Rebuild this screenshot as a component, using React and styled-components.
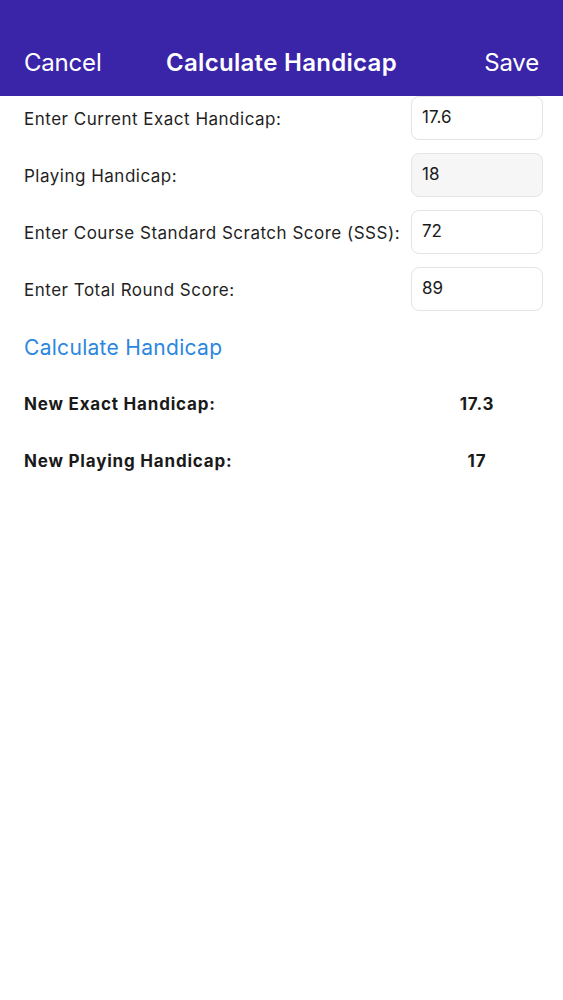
import styled, { createGlobalStyle } from 'styled-components';

const GlobalStyle = createGlobalStyle`
  html, body {
    margin: 0;
    padding: 0;
    background: #ffffff;
  }
  body {
    font-family: Inter, "Liberation Sans", Arial, sans-serif;
  }
`;

const Screen = styled.div`
  width: 563px;
  min-height: 1000px;
  background: #fff;
`;

const NavBar = styled.header`
  height: 96px;
  background: #3a25a9;
  display: grid;
  grid-template-columns: 1fr auto 1fr;
  align-items: end;
  padding: 0 24px 19px 24px;
  box-sizing: border-box;
  color: #fff;
`;

const NavButton = styled.span`
  font-size: 24px;
  font-weight: 400;
  line-height: 28px;
  letter-spacing: -0.2px;
  justify-self: ${(p) => (p.$end ? 'end' : 'start')};
`;

const NavTitle = styled.h1`
  margin: 0;
  font-size: 24px;
  font-weight: 600;
  line-height: 28px;
  letter-spacing: 0.3px;
`;

const Form = styled.div`
  display: flex;
  flex-direction: column;
  gap: 13px;
  padding: 0 20px 0 24px;
`;

const FieldRow = styled.div`
  display: flex;
  align-items: center;
  justify-content: space-between;
`;

const Label = styled.span`
  font-size: 17px;
  color: #1f1f1f;
  letter-spacing: 0.5px;
  white-space: nowrap;
  padding-top: 2px;
`;

const Field = styled.div`
  width: 132px;
  height: 44px;
  box-sizing: border-box;
  border: 1px solid #e4e4e4;
  border-radius: 8px;
  background: ${(p) => (p.$readOnly ? '#f6f6f6' : '#fff')};
  display: flex;
  align-items: center;
  padding: 0 0 2px 10px;
  font-size: 17px;
  color: #1a1a1a;
  flex-shrink: 0;
`;

const CalcLink = styled.button`
  align-self: flex-start;
  background: none;
  border: 0;
  padding: 0;
  margin: 11px 0 0 0;
  font-family: inherit;
  font-size: 21px;
  letter-spacing: 0.3px;
  color: #2b87de;
  cursor: pointer;
`;

const Results = styled.div`
  display: flex;
  flex-direction: column;
  gap: 37px;
  padding: 34px 20px 0 24px;
`;

const ResultRow = styled.div`
  display: flex;
  align-items: center;
  font-size: 17px;
  font-weight: 700;
  letter-spacing: 0.8px;
  color: #1a1a1a;
`;

const ResultLabel = styled.span`
  flex: 1;
`;

const ResultValue = styled.span`
  width: 132px;
  text-align: center;
`;

const fields = [
  { label: 'Enter Current Exact Handicap:', value: '17.6' },
  { label: 'Playing Handicap:', value: '18', readOnly: true },
  { label: 'Enter Course Standard Scratch Score (SSS):', value: '72' },
  { label: 'Enter Total Round Score:', value: '89' },
];

const results = [
  { label: 'New Exact Handicap:', value: '17.3' },
  { label: 'New Playing Handicap:', value: '17' },
];

export default function App() {
  return (
    <>
      <GlobalStyle />
      <Screen>
        <NavBar>
          <NavButton>Cancel</NavButton>
          <NavTitle>Calculate Handicap</NavTitle>
          <NavButton $end>Save</NavButton>
        </NavBar>
        <Form>
          {fields.map((f) => (
            <FieldRow key={f.label}>
              <Label>{f.label}</Label>
              <Field $readOnly={f.readOnly}>{f.value}</Field>
            </FieldRow>
          ))}
          <CalcLink>Calculate Handicap</CalcLink>
        </Form>
        <Results>
          {results.map((r) => (
            <ResultRow key={r.label}>
              <ResultLabel>{r.label}</ResultLabel>
              <ResultValue>{r.value}</ResultValue>
            </ResultRow>
          ))}
        </Results>
      </Screen>
    </>
  );
}
